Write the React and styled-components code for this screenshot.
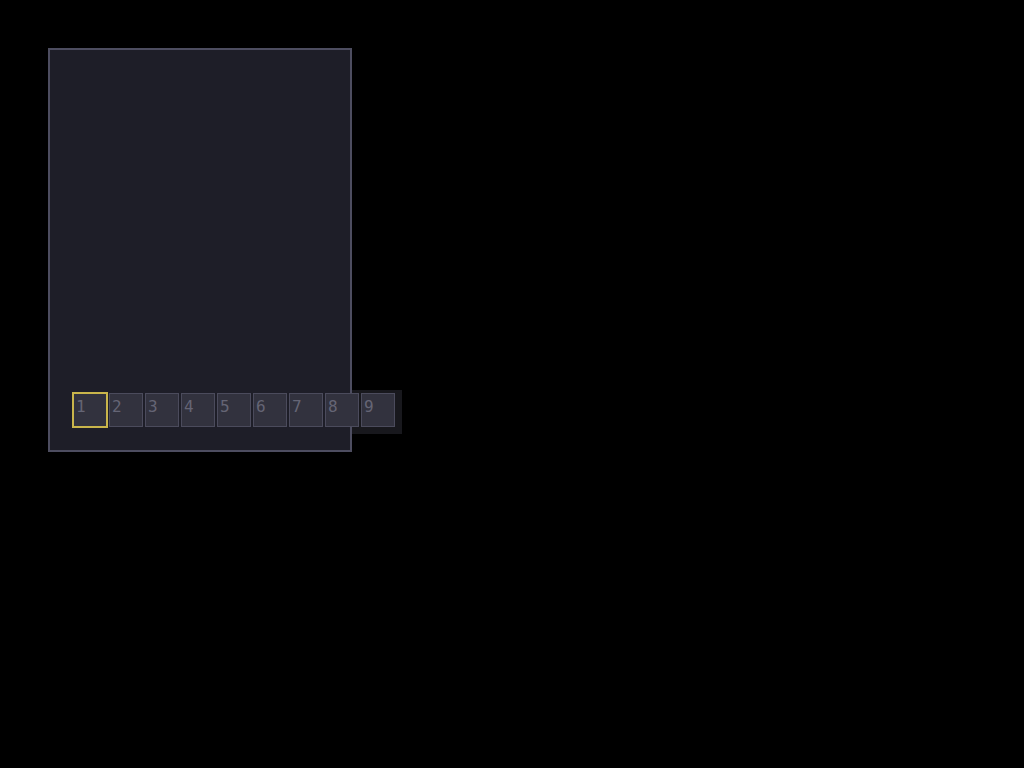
import React from 'react'
import styled, { createGlobalStyle } from 'styled-components'

const Global = createGlobalStyle`
  html, body { margin: 0; padding: 0; background: #000; }
  body { font-family: "DejaVu Sans Mono", monospace; }
`

const Page = styled.div`
  padding: 48px;
  min-height: 768px;
  box-sizing: border-box;
`

const Panel = styled.div`
  position: relative;
  width: 304px;
  height: 404px;
  box-sizing: border-box;
  border: 2px solid #4d4d60;
  background: #1e1e28;
`

const Hotbar = styled.div`
  position: absolute;
  left: 16px;
  top: 340px;
  display: flex;
  padding: 2px 6px 6px 6px;
  background: linear-gradient(to right, transparent 0 286px, #18181d 286px);
`

const Slot = styled.div`
  box-sizing: border-box;
  width: ${p => (p.$active ? 36 : 34)}px;
  height: ${p => (p.$active ? 36 : 34)}px;
  margin: ${p => (p.$active ? 0 : 1)}px;
  border: ${p => (p.$active ? '2px solid #c9b54b' : '1px solid #4b4b5c')};
  background: #32323e;
  color: #656575;
  font-size: 16px;
  font-weight: 300;
  line-height: 1;
  padding: 5px 0 0 2px;
`

export default function App() {
  const slots = [1, 2, 3, 4, 5, 6, 7, 8, 9]
  return (
    <Page>
      <Global />
      <Panel>
        <Hotbar>
          {slots.map(n => (
            <Slot key={n} $active={n === 1}>{n}</Slot>
          ))}
        </Hotbar>
      </Panel>
    </Page>
  )
}
